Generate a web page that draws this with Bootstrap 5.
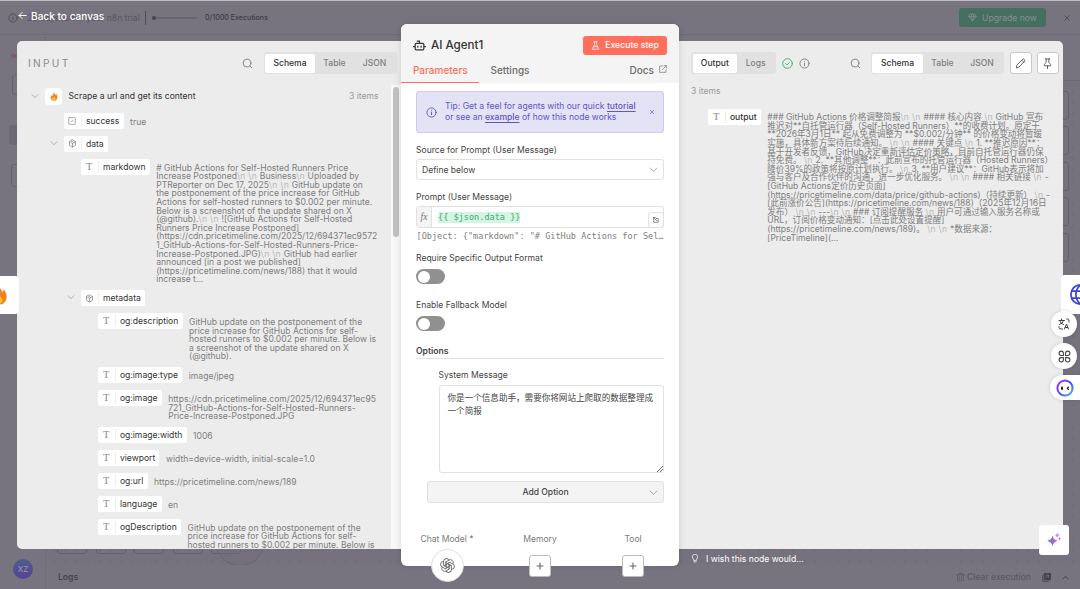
<!DOCTYPE html>
<html lang="en">
<head>
<meta charset="utf-8">
<meta name="viewport" content="width=device-width, initial-scale=1">
<title>AI Agent1</title>
<link href="https://cdn.jsdelivr.net/npm/bootstrap@5.3.0/dist/css/bootstrap.min.css" rel="stylesheet">
<style>
*{box-sizing:border-box}
body{font-family:Inter,"Noto Sans CJK SC",sans-serif;font-size:8.57px;line-height:12px;color:#444;background:#777480;width:1080px;height:589px;overflow:hidden}
svg{display:block;flex:none;fill:none;stroke:currentColor;stroke-width:2;stroke-linecap:round;stroke-linejoin:round}
.stage{width:1080px;height:589px;overflow:hidden}
/* dimmed editor */
.topline{height:1px;background:#bdbdbf}
.banner{height:34px;border-bottom:1px solid #6c6975;color:#4b4954;font-size:8px}
.side{width:46px;border-right:1px solid #706d78}
.side .ghost{border:1px solid #666370;border-radius:3px}
.canvas{background:#75727d radial-gradient(circle,#6c6974 .6px,transparent .8px) 3px 5px/11.2px 11.2px}
.logbar{height:24px;background:#777480;color:#45434d}
.up{width:87px;height:19px;background:#456f60;color:#85908f;border-radius:3px;font-size:8.6px}
.bar{width:41px;height:2px;background:#686571}
.gnode{width:30px;height:29px;border:1px solid #64616c;border-radius:3px}
.avatar{width:20px;height:20px;border-radius:50%;background:linear-gradient(#4e5e8d,#56429a);color:#9d9bab;font-size:8px}
/* panels */
.layer{inset:0}
.back{left:18px;top:8.500px;color:#fff;font-size:10.1px;font-weight:500}
.trio{padding:24px 17px 0}
.pane{width:384px;height:508px;background:#ececec;overflow:hidden}
.pane.l{border-radius:5px 0 0 5px}.pane.r{border-radius:0 5px 0 0}
.mid{width:278px;height:542px;background:#fff;border-radius:6px;box-shadow:0 0 7px #0002;z-index:2}
.inp{font-size:10.2px;letter-spacing:2.3px;color:#8a8a8a;width:214px}
.seg{height:22px;background:#e1e1e1;border-radius:3px;padding:1.5px;color:#7f7f7f}
.seg span{height:19px;display:flex;align-items:center;justify-content:center;border-radius:2px;font-weight:500;font-size:8.57px}
.seg .on{background:#fff;color:#333}
.ic{color:#808080}
.cv{color:#8c8c8c;stroke-width:1.9}
.node{margin-bottom:6.9px;align-items:flex-start;min-height:16px}
.pill{height:16px;background:#fff;border-radius:2px;padding-right:4.2px;color:#333;font-size:8.6px;white-space:nowrap;flex:none}
.pill .ty{width:17.6px;height:12px;border-right:1px solid #eee;margin-right:4.3px;color:#888}
.ty b{font:400 10.500px/12px "Liberation Serif",serif;color:#8c8c8c}
.val{padding:4.800px 0 0 6.5px;line-height:8.6px;margin-bottom:-.5px;white-space:pre;color:#7e7e7e;font-size:8.57px}
.val i{font-style:normal;color:#b9b9b9;letter-spacing:.3px}
.track{width:10px;background:#f8f8f8;padding:2px 2px}
.thumb{width:6px;height:150px;border-radius:3px;background:#c1c1c1}
.mut{color:#9b9b9b}
.sq{width:22px;height:22px;background:#fff;border:1px solid #c9c9c9;border-radius:3px;color:#555}
/* parameters */
.head{height:59px;background:#f4f4f4;border-radius:6px 6px 0 0;padding:0 12px}
.run{width:84px;height:19px;background:#ff6f5c;color:#fff;border-radius:3px;font-weight:500;font-size:8.7px}
.tabs{font-size:10px;font-weight:500;color:#6d6d6d}
.tabs .cur{width:78px;height:19px;padding-left:12px;margin-left:-12px;color:#ff6f5c;border-bottom:1.5px solid #ff6f5c}
.form{padding:8px 15px 0;color:#444}
.tip{height:42px;border:1px solid #cdc9ef;border-radius:3px;background:#e4e2f5;color:#6156c2;line-height:11.4px}
.tip u{font-weight:500;text-underline-offset:1.5px}
.box{border:1px solid #e1e1e1;border-radius:3px}
.lab{height:12px;white-space:nowrap}
.mono{font-family:"DejaVu Sans Mono",monospace}
.sw{width:28.5px;height:15px;border-radius:8px;background:#909090;padding:1.5px}
.sw::before{content:"";display:block;width:12px;height:12px;border-radius:50%;background:#fff}
.plus{width:22px;height:22px;background:#fff;border:1px solid #bcbcbc;border-radius:3px;color:#666}
.oa{width:33px;height:33px;border-radius:50%;background:#fff;border:1px solid #ddd;color:#777}
.float{background:#fff;position:absolute;display:flex;align-items:center;justify-content:center;z-index:4}
</style>
</head>
<body>
<svg width="0" height="0" style="position:absolute"><defs>
<symbol id="search" viewBox="0 0 24 24"><circle cx="11" cy="11" r="8.5"/><path d="m21.5 21.5-4.3-4.3"/></symbol>
<symbol id="cube" viewBox="0 0 24 24"><path d="M12 2.500 20 7v10l-8 4.500L4 17V7zM4.500 7.300 12 12l7.500-4.700M12 12v9M8 4.800l8 4.700"/></symbol>
<symbol id="chev" viewBox="0 0 24 24"><path d="m3 8 9 9 9-9"/></symbol>
<symbol id="info" viewBox="0 0 24 24"><circle cx="12" cy="12" r="10"/><path d="M12 11v6M12 7v.1"/></symbol>
<symbol id="fire" viewBox="0 0 24 30"><path stroke="none" fill="#f5821f" d="M11 0c2 5 5 7 6 11 1-1 2-3 2-5 5 7 6 14 2 19-4 6-14 6-18 0C-1 19 1 13 4 10c0 2 1 3 2 4 3-4 5-8 5-14z"/><path stroke="none" fill="#ffc62e" d="M12 13c0 4 5 6 5 10 0 7-11 7-11 0 0-3 2-4 3-6 1 2 1 3 2 3 1-2 1-4 1-7z"/></symbol>
</defs></svg>
<div class="stage position-relative d-flex flex-column">
  <div class="topline"></div>
  <div class="banner d-flex align-items-center">
    <svg class="ms-2" width="10" height="10"><use href="#info"/></svg>
    <span style="width:112px;margin-left:9px;font-size:8.57px;color:#56545f;white-space:nowrap">29 days left in your n8n trial</span>
    <span style="width:1px;height:14px;background:#4f4d58;margin-left:6px"></span>
    <span style="width:4px;height:4px;border-radius:50%;background:#45434d;margin-left:6px"></span><span class="bar"></span>
    <span style="margin-left:8px;font-weight:500;font-size:7.1px;color:#3d3b44">0/1000 Executions</span>
    <span class="up ms-auto d-flex align-items-center justify-content-center"><svg style="margin-right:5px" width="9" height="9" viewBox="0 0 24 24"><path d="M6 3h12l4 6-10 12L2 9zM2 9h20M12 21 8 9l3-6M12 21l4-12-3-6"/></svg>Upgrade now</span>
    <svg style="margin:0 10px 0 18px;color:#45434d" width="6" height="6" viewBox="0 0 24 24"><path stroke-width="3" d="m3 3 18 18M21 3 3 21"/></svg>
  </div>
  <div class="d-flex flex-grow-1">
    <div class="side d-flex flex-column">
      <svg style="margin:17px 0 0 11px;color:#963e66" width="10" height="8" viewBox="0 0 20 16"><circle cx="5" cy="8" r="3.500"/><path d="M9 8h10"/></svg>
      <span class="ghost" style="margin:14px 0 0 12px;width:20px;height:21px"></span>
      <span style="margin:30px 0 0 9px;width:28px;height:20px;background:#6d6a77;border-radius:3px"></span>
      <span class="ghost" style="margin:19px 0 0 11px;width:22px;height:23px"></span>
      <span class="avatar d-flex align-items-center justify-content-center mt-auto" style="margin:0 0 10px 13px">XZ</span>
    </div>
    <div class="d-flex flex-column flex-grow-1">
      <div style="height:46px;border-bottom:1px solid #6c6975"></div>
      <div class="canvas flex-grow-1 d-flex flex-column justify-content-between overflow-hidden">
        <div class="ms-auto d-flex flex-column" style="margin:10px 11px 0 0;gap:6.4px"><span class="gnode"></span><span class="gnode"></span><span class="gnode"></span><span class="gnode"></span><span class="gnode"></span></div>
        <div class="d-flex position-relative" style="margin:0 0 11px 11px;gap:8.500px"><span class="gnode"></span><span class="gnode"></span><span class="gnode"></span><span class="gnode"></span><span class="gnode"></span><span style="position:absolute;left:158px;top:-9px;width:50px;height:50px;border-radius:50%;border:1px solid #696672;background:#716e7a66"></span></div>
      </div>
      <div class="logbar d-flex align-items-center" style="padding:0 11px 0 12px"><b class="fw-semibold">Logs</b>
        <span class="ms-auto d-flex align-items-center" style="color:#5a5863;font-weight:500"><svg width="9" height="10" viewBox="0 0 24 24" style="margin-right:2px"><path d="M2 6h20M8 6V2h8v4M4 6v16h16V6M9 11v7M15 11v7"/></svg>Clear execution</span>
        <svg width="9" height="9" viewBox="0 0 24 24" style="margin-left:11px;color:#3d3b44"><rect x="6" y="1" width="17" height="17" rx="2" fill="#45434d"/><path d="M2 6v16h16"/><path stroke="#777480" d="m10 13 7-7m-5 0h5v5"/></svg>
        <svg width="7" height="7" viewBox="0 0 24 24" style="margin:0 0 0 11px;color:#3d3b44"><path stroke-width="3" d="m3 17 9-9 9 9"/></svg></div>
    </div>
  </div>

  <div class="layer position-absolute">
    <div class="back position-absolute d-flex align-items-center" style="line-height:14px"><svg class="me-1" width="9" height="9" viewBox="0 0 24 24"><path stroke-width="2.500" d="M22 12H3m8-8-8 8 8 8"/></svg>Back to canvas</div>
    <div class="trio d-flex align-items-center">
      <section class="pane l">
        <div class="d-flex align-items-center" style="padding:11px 0 0 11px"><span class="inp">INPUT</span>
          <svg class="ic" width="11" height="11"><use href="#search"/></svg>
          <div class="seg d-flex" style="width:133px;margin-left:10.500px"><span class="on" style="width:50px">Schema</span><span style="width:39px">Table</span><span style="width:41px">JSON</span></div></div>
        <div class="d-flex" style="margin-top:11px;height:464px">
          <div class="flex-grow-1" style="padding-top:2px">
            <div class="d-flex align-items-center" style="padding-left:14px;height:18px;margin-bottom:8px"><svg class="cv" width="8" height="8"><use href="#chev"/></svg><span class="bg-white rounded-1 d-flex align-items-center justify-content-center" style="width:17px;height:17px;margin:0 6.500px 0 6px"><svg width="8" height="9"><use href="#fire"/></svg></span><span style="font-size:8.6px;color:#333">Scrape a url and get its content</span><span class="mut ms-auto" style="margin-right:12.500px">3 items</span></div>
            <div class="node d-flex" style="padding-left:47px"><span class="pill d-flex align-items-center"><span class="ty d-flex align-items-center justify-content-center"><svg width="8" height="8" viewBox="0 0 24 24"><rect x="2" y="2" width="20" height="20" rx="2"/><path d="m8 12 3 3 5-6"/></svg></span>success</span><span class="val">true</span></div>
            <div class="node d-flex" style="padding-left:33px"><svg class="cv" style="margin:3px 6px 0 0" width="8" height="8"><use href="#chev"/></svg><span class="pill d-flex align-items-center"><span class="ty d-flex align-items-center justify-content-center"><svg width="9" height="9"><use href="#cube"/></svg></span>data</span></div>
            <div class="node d-flex" style="padding-left:64px"><span class="pill d-flex align-items-center"><span class="ty d-flex align-items-center justify-content-center"><b>T</b></span>markdown</span><span class="val"># GitHub Actions for Self-Hosted Runners Price
Increase Postponed<i>\n \n </i>Business<i>\n </i>Uploaded by
PTReporter on Dec 17, 2025<i>\n \n </i>GitHub update on
the postponement of the price increase for GitHub
Actions for self-hosted runners to $0.002 per minute.
Below is a screenshot of the update shared on X
(@github).<i>\n \n </i>![GitHub Actions for Self-Hosted
Runners Price Increase Postponed]
(https://cdn.pricetimeline.com/2025/12/694371ec9572
1_GitHub-Actions-for-Self-Hosted-Runners-Price-
Increase-Postponed.JPG)<i>\n \n </i>GitHub had earlier
announced [in a post we published]
(https://pricetimeline.com/news/188) that it would
increase t...</span></div>
            <div class="node d-flex" style="padding-left:50px"><svg class="cv" style="margin:3px 6px 0 0" width="8" height="8"><use href="#chev"/></svg><span class="pill d-flex align-items-center"><span class="ty d-flex align-items-center justify-content-center"><svg width="9" height="9"><use href="#cube"/></svg></span>metadata</span></div>
            <div class="node d-flex" style="padding-left:81px"><span class="pill d-flex align-items-center"><span class="ty d-flex align-items-center justify-content-center"><b>T</b></span>og:description</span><span class="val">GitHub update on the postponement of the
price increase for GitHub Actions for self-
hosted runners to $0.002 per minute. Below is
a screenshot of the update shared on X
(@github).</span></div>
            <div class="node d-flex" style="padding-left:81px"><span class="pill d-flex align-items-center"><span class="ty d-flex align-items-center justify-content-center"><b>T</b></span>og:image:type</span><span class="val">image/jpeg</span></div>
            <div class="node d-flex" style="padding-left:81px"><span class="pill d-flex align-items-center"><span class="ty d-flex align-items-center justify-content-center"><b>T</b></span>og:image</span><span class="val">https://cdn.pricetimeline.com/2025/12/694371ec95
721_GitHub-Actions-for-Self-Hosted-Runners-
Price-Increase-Postponed.JPG</span></div>
            <div class="node d-flex" style="padding-left:81px"><span class="pill d-flex align-items-center"><span class="ty d-flex align-items-center justify-content-center"><b>T</b></span>og:image:width</span><span class="val">1006</span></div>
            <div class="node d-flex" style="padding-left:81px"><span class="pill d-flex align-items-center"><span class="ty d-flex align-items-center justify-content-center"><b>T</b></span>viewport</span><span class="val">width=device-width, initial-scale=1.0</span></div>
            <div class="node d-flex" style="padding-left:81px"><span class="pill d-flex align-items-center"><span class="ty d-flex align-items-center justify-content-center"><b>T</b></span>og:url</span><span class="val">https://pricetimeline.com/news/189</span></div>
            <div class="node d-flex" style="padding-left:81px"><span class="pill d-flex align-items-center"><span class="ty d-flex align-items-center justify-content-center"><b>T</b></span>language</span><span class="val">en</span></div>
            <div class="node d-flex" style="padding-left:81px"><span class="pill d-flex align-items-center"><span class="ty d-flex align-items-center justify-content-center"><b>T</b></span>ogDescription</span><span class="val">GitHub update on the postponement of the
price increase for GitHub Actions for self-
hosted runners to $0.002 per minute. Below is</span></div>
          </div>
          <div class="track flex-shrink-0"><div class="thumb"></div></div>
        </div>
      </section>

      <section class="mid flex-shrink-0 d-flex flex-column">
        <div class="head">
          <div class="d-flex align-items-center" style="padding-top:11px;height:31px"><svg style="color:#333" width="13" height="13" viewBox="0 0 24 24"><path stroke-width="2.300" d="M12 8V4H8M1 14h2M21 14h2M9 13v2M15 13v2"/><rect stroke-width="2.300" x="4" y="8" width="16" height="12" rx="2"/></svg><span style="margin-left:5px;font-size:11.600px;font-weight:500;color:#333">AI Agent1</span>
            <span class="run ms-auto d-flex align-items-center justify-content-center"><svg style="margin-right:5px" width="9" height="9" viewBox="0 0 24 24"><path d="M8 2h8M9.500 2v7L4 20q-1 2 1 2h14q2 0 1-2L14.500 9V2M7 15h10"/></svg>Execute step</span></div>
          <div class="tabs d-flex" style="line-height:12px;padding-top:9px"><span class="cur">Parameters</span><span style="margin-left:11.500px">Settings</span><span class="ms-auto d-flex" style="height:12px">Docs<svg style="margin:1px 0 0 5px" width="8" height="8" viewBox="0 0 24 24"><path d="M10 3H2v19h19v-8M15 2h7v7M22 2 10 14"/></svg></span></div>
        </div>
        <div class="form flex-grow-1 d-flex flex-column">
          <div class="tip d-flex align-items-center"><svg style="margin:0 8px 0 9px" width="11" height="11"><use href="#info"/></svg><span style="white-space:nowrap">Tip: Get a feel for agents with our quick <u>tutorial</u><br>or see an <u>example</u> of how this node works</span><svg style="margin:0 9px 0 auto" width="4" height="4" viewBox="0 0 10 10"><path stroke-width="1.800" d="m1 1 8 8M9 1 1 9"/></svg></div>
          <div class="lab" style="margin-top:11px">Source for Prompt (User Message)</div>
          <div class="box d-flex align-items-center justify-content-between" style="height:21px;margin-top:3px;padding:0 5px"><span>Define below</span><svg class="cv" width="9" height="9"><use href="#chev"/></svg></div>
          <div class="lab" style="margin-top:11px">Prompt (User Message)</div>
          <div class="box d-flex" style="height:22px;margin-top:3px"><span class="d-flex align-items-center justify-content-center" style="width:15px;background:#f4f4f4;border-right:1px solid #e1e1e1;font:italic 9.500px 'Liberation Serif',serif;color:#777">fx</span><span class="mono" style="margin:5px 0 0 6px;height:11px;line-height:11px;background:#d4f5e2;color:#3cab74;font-size:8.570px">{{ $json.data }}</span><span class="box ms-auto d-flex align-items-center justify-content-center" style="width:16px;height:16px;margin:5px -1px 0 0;color:#666"><svg width="6" height="6" viewBox="0 0 24 24"><path stroke-width="3" d="M3 12v9h18V6h-8M2 9V2h7M2 2l13 13"/></svg></span></div>
          <div class="mono" style="margin:3px 0 0 .5px;font-size:8.550px;white-space:nowrap;color:#808080;line-height:11px">[Object: {"markdown": "# GitHub Actions for Sel…</div>
          <div class="lab" style="margin-top:10px">Require Specific Output Format</div><div class="sw" style="margin-top:5px"></div>
          <div class="lab" style="margin-top:15px">Enable Fallback Model</div><div class="sw" style="margin-top:5px"></div>
          <div class="lab" style="margin-top:13px;border-bottom:1px solid #e1e1e1;font-weight:600;height:15px;line-height:14px">Options</div>
          <div class="lab" style="margin:10px 0 0 22.500px">System Message</div>
          <div class="box position-relative" style="height:88px;margin:4px 0 0 22.500px;padding:5px 8px;font-family:'Noto Sans CJK SC',sans-serif;font-size:8.570px;line-height:13px;white-space:nowrap">你是一个信息助手，需要你将网站上爬取的数据整理成<br>一个简报<svg class="position-absolute" style="right:0;bottom:0" width="6" height="6" viewBox="0 0 6 6"><path stroke-width=".8" d="M0 6 6 0M3 6l3-3"/></svg></div>
          <div class="box position-relative d-flex align-items-center justify-content-center" style="height:22px;margin:8px 0 0 11px;background:#f4f4f4;font-weight:500">Add Option<svg class="cv position-absolute" style="right:5px" width="9" height="9"><use href="#chev"/></svg></div>
          <div class="d-flex" style="margin-top:30px;color:#7b7b7b;height:46px"><div class="d-flex flex-column align-items-center" style="width:62px"><span style="white-space:nowrap">Chat Model *</span><span class="oa d-flex align-items-center justify-content-center flex-shrink-0" style="margin-top:4px"><svg width="15" height="15" viewBox="0 0 24 24"><g stroke-width="1.600"><path id="petal" d="M9.500 13.500V6.200l5-2.900a4.500 4.500 0 0 1 6.300 5.900M9.500 10.300l6.300-3.600"/><use href="#petal" transform="rotate(60 12 12)"/><use href="#petal" transform="rotate(120 12 12)"/><use href="#petal" transform="rotate(180 12 12)"/><use href="#petal" transform="rotate(240 12 12)"/><use href="#petal" transform="rotate(300 12 12)"/></g></svg></span></div>
            <div class="d-flex flex-column align-items-center" style="width:124px"><span>Memory</span><span class="plus d-flex align-items-center justify-content-center flex-shrink-0" style="margin-top:10px"><svg width="8" height="8" viewBox="0 0 8 8"><path stroke-width="1.100" d="M1 4h6M4 1v6"/></svg></span></div>
            <div class="d-flex flex-column align-items-center" style="width:62px"><span>Tool</span><span class="plus d-flex align-items-center justify-content-center flex-shrink-0" style="margin-top:10px"><svg width="8" height="8" viewBox="0 0 8 8"><path stroke-width="1.100" d="M1 4h6M4 1v6"/></svg></span></div></div>
        </div>
      </section>

      <section class="pane r">
        <div class="d-flex align-items-center" style="padding:11px 0 0 12px">
          <div class="seg d-flex" style="width:84.500px"><span class="on" style="width:45px">Output</span><span style="width:37px">Logs</span></div>
          <svg style="color:#31b26b;margin-left:6px" width="11" height="11" viewBox="0 0 24 24"><circle cx="12" cy="12" r="10.500"/><path d="m8 12 3 3 5-5"/></svg><svg class="ic" style="margin-left:6px" width="11" height="11"><use href="#info"/></svg>
          <svg class="ic" style="margin-left:40px" width="11" height="11"><use href="#search"/></svg>
          <div class="seg d-flex" style="width:133px;margin-left:10px"><span class="on" style="width:51px">Schema</span><span style="width:39px">Table</span><span style="width:40px">JSON</span></div>
          <span class="sq d-flex align-items-center justify-content-center" style="margin-left:6px"><svg width="11" height="11" viewBox="0 0 24 24"><path d="m3 21 1.500-6L17 2.500q2-1 3.500.8t.8 3.400L9 19.300zM15 5l4.500 4.500"/></svg></span>
          <span class="sq d-flex align-items-center justify-content-center" style="margin-left:5px"><svg width="11" height="11" viewBox="0 0 24 24"><path d="M7 2h10M9 2v8l-4 4v3h14v-3l-4-4V2M12 17v6"/></svg></span></div>
        <div class="mut" style="margin:11px 0 0 12px">3 items</div>
        <div class="node d-flex" style="padding-left:29px;margin-top:11.500px"><span class="pill d-flex align-items-center"><span class="ty d-flex align-items-center justify-content-center"><b>T</b></span><span class="fw-medium" style="font-weight:500">output</span></span><span class="val">### GitHub Actions 价格调整简报<i>\n \n </i>#### 核心内容 <i>\n </i>GitHub 宣布
推迟对**自托管运行器（Self-Hosted Runners）**的收费计划。原定于
**2026年3月1日** 起从免费调整为 **$0.002/分钟** 的价格变动将暂缓
实施，具体新方案待后续通知。 <i>\n \n </i>#### 关键点 <i>\n </i>1. **推迟原因**：
基于开发者反馈，GitHub决定重新评估定价策略，目前自托管运行器仍保
持免费。 <i>\n </i>2. **其他调整**：此前宣布的托管运行器（Hosted Runners）
降价39%的政策将按原计划执行。 <i>\n </i>3. **用户建议**：GitHub表示将加
强与客户及合作伙伴的沟通，进一步优化服务。 <i>\n \n </i>#### 相关链接 <i>\n </i>-
[GitHub Actions定价历史页面]
(https://pricetimeline.com/data/price/github-actions)（持续更新） <i>\n </i>-
[此前涨价公告](https://pricetimeline.com/news/188)（2025年12月16日
发布） <i>\n \n </i>---<i>\n \n </i>### 订阅提醒服务 <i>\n </i>用户可通过输入服务名称或
URL，订阅价格变动通知：[点击此处设置提醒]
(https://pricetimeline.com/news/189)。 <i>\n \n </i>*数据来源：
[PriceTimeline](...</span></div>
      </section>
    </div>
    <div class="position-absolute d-flex align-items-center text-white" style="left:691px;top:552px;height:14px;font-size:8.6px"><svg style="margin:-2px 7px 0 0" width="8" height="9" viewBox="0 0 20 24"><path d="M6 16q0-3-2-5a7 7 0 1 1 12 0q-2 2-2 5zM7 21h6"/></svg>I wish this node would...</div>
  </div>

  <div class="float overflow-hidden" style="left:0;top:276px;width:19px;height:38px;border-radius:0 4px 4px 0"><svg style="margin-left:-22px" width="18" height="20"><use href="#fire"/></svg></div>
  <div class="float overflow-hidden justify-content-start" style="left:1061px;top:275px;width:19px;height:39px;border-radius:4px 0 0 4px"><svg style="margin-left:9px;color:#3b45d8" width="21" height="21" viewBox="0 0 24 24"><circle cx="12" cy="12" r="11"/><path d="M2 8h20M2 16h20M12 1c-7 6-7 16 0 22M12 1c7 6 7 16 0 22"/></svg></div>
  <div class="float rounded-circle" style="left:1051px;top:311px;width:26px;height:26px;box-shadow:0 0 4px #0002;color:#444"><svg width="12" height="12" viewBox="0 0 24 24"><path d="M2 5h11M7 2v3M3 13q7-2 8-8M4 7q2 5 7 6M13 22l4-10 4 10M14.500 19h5M17 2h2q3 0 3 4v2M2 17v2q0 3 4 3h3"/></svg></div>
  <div class="float rounded-circle" style="left:1051px;top:343px;width:26px;height:26px;box-shadow:0 0 4px #0002;color:#444"><svg width="13" height="13" viewBox="0 0 24 24"><path d="M10 10H6a4 4 0 1 1 4-4zM14 10V6a4 4 0 1 1 4 4zM10 14v4a4 4 0 1 1-4-4zM14 14h4a4 4 0 1 1-4 4z"/></svg></div>
  <div class="float" style="left:1050px;top:375px;width:30px;height:25px;border-radius:13px 0 0 13px;box-shadow:0 0 4px #0002"><svg width="18" height="18" viewBox="0 0 18 18"><defs><linearGradient id="ring" x2="1" y2="1"><stop offset="0" stop-color="#b130ff"/><stop offset=".5" stop-color="#4b48f0"/><stop offset="1" stop-color="#28c4ee"/></linearGradient></defs><circle cx="9" cy="9" r="7.600" stroke="url(#ring)"/><path stroke="#222" stroke-width="2" d="M6 8.500v1.500"/><path stroke="#222" stroke-width="1.500" d="m12.300 8.200-1 1 1 1"/></svg></div>
  <div class="float" style="left:1039px;top:525px;width:30px;height:30px;border-radius:3px"><svg width="14" height="14" viewBox="0 0 24 24"><defs><linearGradient id="spark" x2="1"><stop offset="0" stop-color="#5f6ff0"/><stop offset="1" stop-color="#d267b4"/></linearGradient></defs><g stroke="none" fill="url(#spark)"><path d="M9.500 4c1.500 6 3 7.500 9 9.500-6 1.500-7.500 3.500-9 9.500-1.500-6-3-8-9-9.500 6-2 7.500-3.500 9-9.500z"/><circle cx="17.500" cy="4" r="3" fill="#c99be8"/><path fill="#d267b4" d="m21.500 7 1 2 1.500.8-1.500.8-1 2-1-2-1.500-.8 1.500-.8z"/></g></svg></div>
</div>
<script src="https://cdn.jsdelivr.net/npm/bootstrap@5.3.0/dist/js/bootstrap.bundle.min.js"></script>
</body>
</html>
